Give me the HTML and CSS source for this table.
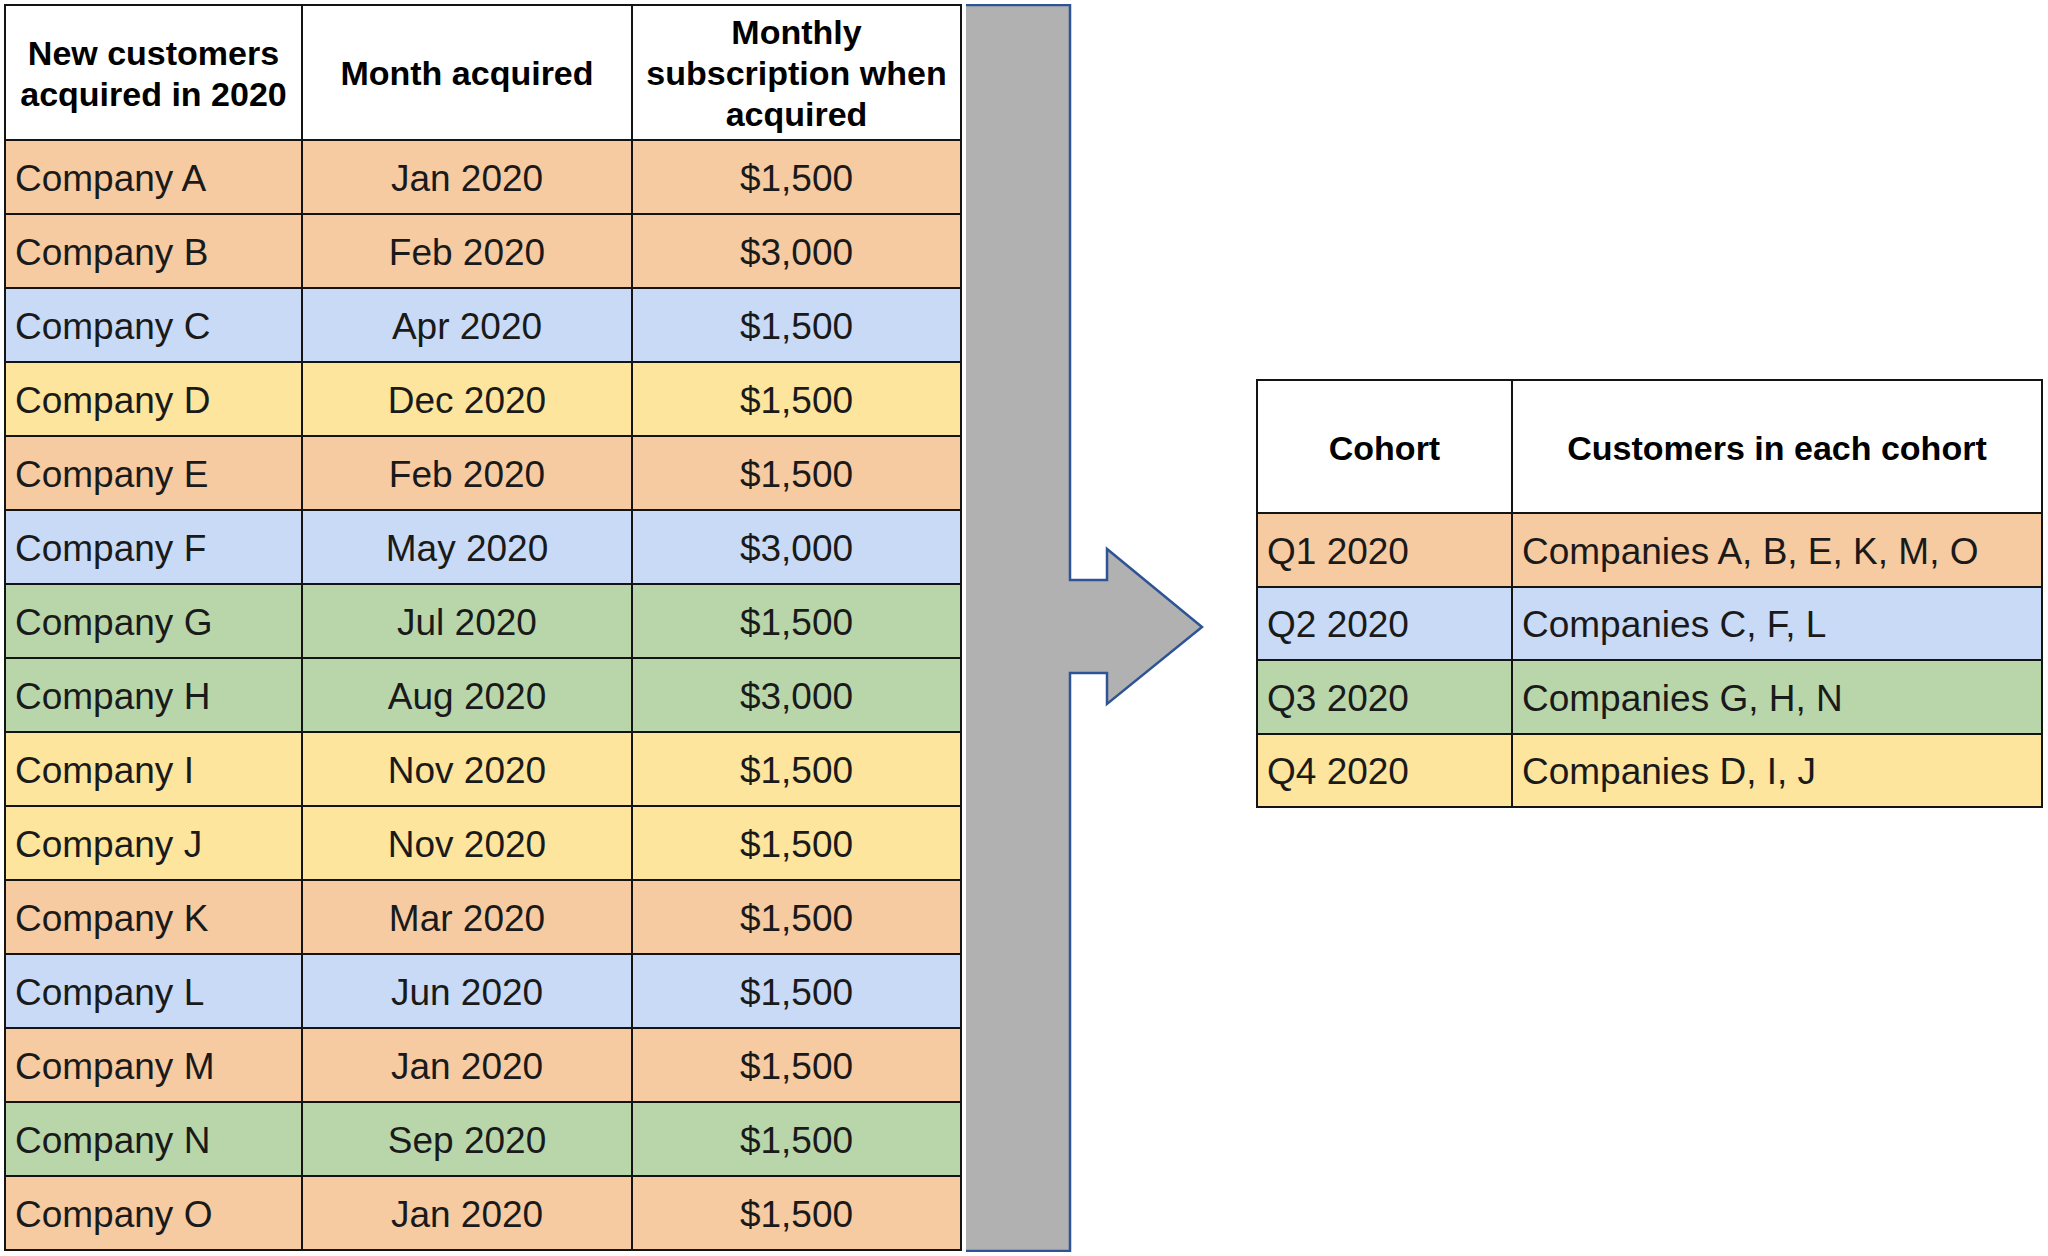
FILE: index.html
```html
<!DOCTYPE html>
<html>
<head>
<meta charset="utf-8">
<link rel="stylesheet" href="styles.css">
</head>
<body>
<div class="page">
  <table class="grid customers">
    <colgroup>
      <col class="c1"><col class="c2"><col class="c3">
    </colgroup>
    <thead>
      <tr class="head">
        <th>New customers acquired in 2020</th>
        <th>Month acquired</th>
        <th>Monthly subscription when acquired</th>
      </tr>
    </thead>
    <tbody>
      <tr class="orange"><td>Company A</td><td>Jan 2020</td><td>$1,500</td></tr>
      <tr class="orange"><td>Company B</td><td>Feb 2020</td><td>$3,000</td></tr>
      <tr class="blue"><td>Company C</td><td>Apr 2020</td><td>$1,500</td></tr>
      <tr class="yellow"><td>Company D</td><td>Dec 2020</td><td>$1,500</td></tr>
      <tr class="orange"><td>Company E</td><td>Feb 2020</td><td>$1,500</td></tr>
      <tr class="blue"><td>Company F</td><td>May 2020</td><td>$3,000</td></tr>
      <tr class="green"><td>Company G</td><td>Jul 2020</td><td>$1,500</td></tr>
      <tr class="green"><td>Company H</td><td>Aug 2020</td><td>$3,000</td></tr>
      <tr class="yellow"><td>Company I</td><td>Nov 2020</td><td>$1,500</td></tr>
      <tr class="yellow"><td>Company J</td><td>Nov 2020</td><td>$1,500</td></tr>
      <tr class="orange"><td>Company K</td><td>Mar 2020</td><td>$1,500</td></tr>
      <tr class="blue"><td>Company L</td><td>Jun 2020</td><td>$1,500</td></tr>
      <tr class="orange"><td>Company M</td><td>Jan 2020</td><td>$1,500</td></tr>
      <tr class="green"><td>Company N</td><td>Sep 2020</td><td>$1,500</td></tr>
      <tr class="orange"><td>Company O</td><td>Jan 2020</td><td>$1,500</td></tr>
    </tbody>
  </table>

  <svg class="arrow" width="240" height="1248" viewBox="0 0 240 1248">
    <polygon points="0,1 104,1 104,576 141,576 141,545 236,623 141,700 141,669 104,669 104,1247 0,1247" fill="#b1b1b1"/>
    <polyline points="0,1 104,1 104,576 141,576 141,545 236,623 141,700 141,669 104,669 104,1247 0,1247" fill="none" stroke="#2f5496" stroke-width="2.5" stroke-linejoin="miter"/>
  </svg>

  <table class="grid cohorts">
    <colgroup>
      <col class="k1"><col class="k2">
    </colgroup>
    <thead>
      <tr class="head">
        <th>Cohort</th>
        <th>Customers in each cohort</th>
      </tr>
    </thead>
    <tbody>
      <tr class="orange"><td>Q1 2020</td><td>Companies A, B, E, K, M, O</td></tr>
      <tr class="blue"><td>Q2 2020</td><td>Companies C, F, L</td></tr>
      <tr class="green"><td>Q3 2020</td><td>Companies G, H, N</td></tr>
      <tr class="yellow"><td>Q4 2020</td><td>Companies D, I, J</td></tr>
    </tbody>
  </table>
</div>
</body>
</html>
```

FILE: styles.css
```css
html, body {
  margin: 0;
  padding: 0;
  background: #ffffff;
}

.page {
  display: flex;
  align-items: flex-start;
  padding: 4px;
  font-family: "Liberation Sans", Arial, sans-serif;
}

.grid {
  border-collapse: separate;
  border-spacing: 2px;
  background: #141414;
  table-layout: fixed;
  flex: none;
}

.grid th,
.grid td {
  box-sizing: border-box;
  padding: 4px 9px 0;
  vertical-align: middle;
}

.grid th {
  background: #ffffff;
  color: #000000;
  font-weight: bold;
  font-size: 34px;
  line-height: 41px;
  text-align: center;
}

.grid td {
  color: #1a1a1a;
  font-size: 37px;
  line-height: 42px;
  white-space: nowrap;
}

/* left table */
.customers {
  width: 958px;
}
.customers .c1 { width: 295px; }
.customers .c2 { width: 328px; }
.customers .c3 { width: 327px; }
.customers .head th { height: 133px; padding: 2px 6px 0; }
.customers tbody td { height: 72px; }
.customers td:nth-child(1) { text-align: left; }
.customers td:nth-child(2),
.customers td:nth-child(3) { text-align: center; }

/* arrow */
.arrow {
  flex: none;
  display: block;
  margin-left: 4px;
}

/* right table */
.cohorts {
  width: 787px;
  margin-left: 50px;
  margin-top: 375px;
}
.cohorts .k1 { width: 253px; }
.cohorts .k2 { width: 528px; }
.cohorts .head th { height: 131px; }
.cohorts tbody td { height: 71.5px; text-align: left; }

/* row colours */
.orange td { background: #f7cba1; }
.blue td { background: #c9daf6; }
.green td { background: #b9d6ab; }
.yellow td { background: #fde59d; }
```
